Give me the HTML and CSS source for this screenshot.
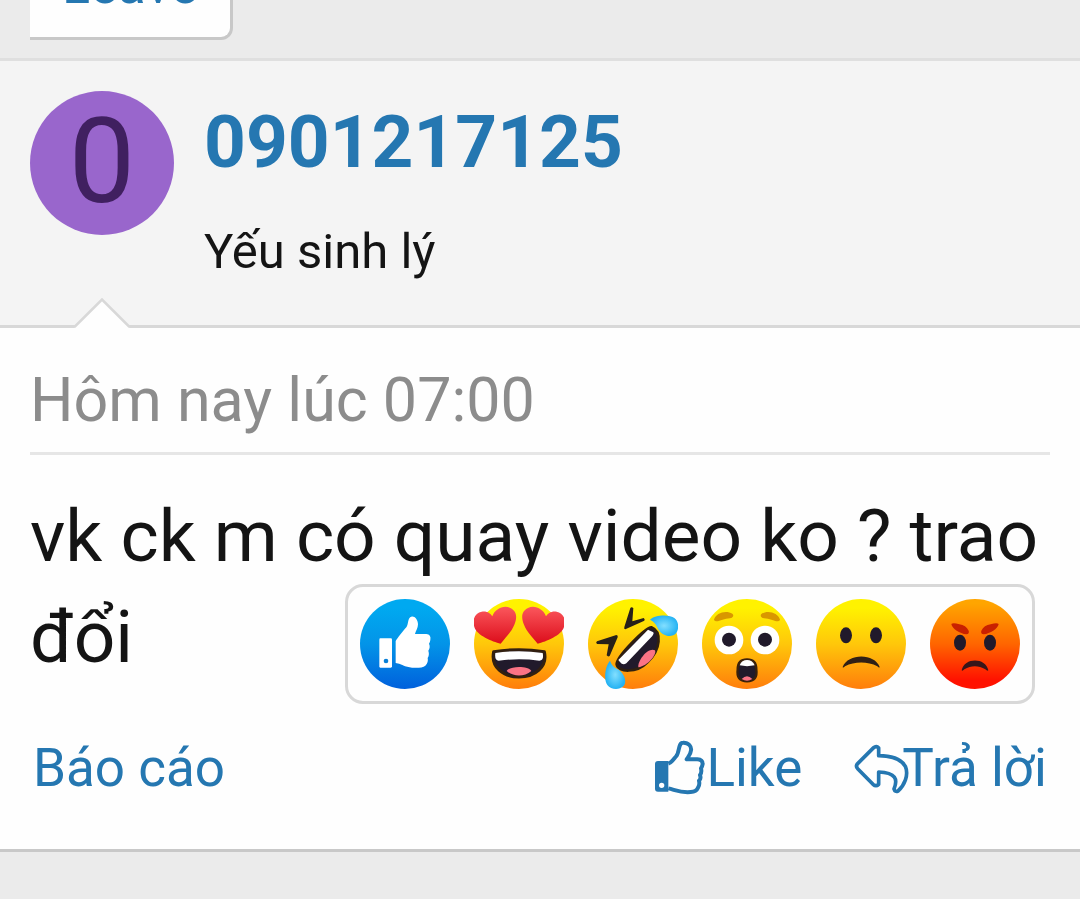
FILE: index.html
```html
<!DOCTYPE html>
<html lang="vi">
<head>
<meta charset="utf-8">
<meta name="viewport" content="width=device-width, initial-scale=1">
<title>0901217125</title>
<link rel="stylesheet" href="styles.css">
</head>
<body>
<div class="toolbar"><button class="leave" type="button">Leave</button></div>
<article class="post">
  <header class="user">
    <a class="avatar" href="#" aria-label="0901217125">0</a>
    <div class="user-info">
      <h1 class="name"><a href="#">0901217125</a></h1>
      <p class="title">Yếu sinh lý</p>
    </div>
    <svg class="notch" viewBox="0 0 60 30" aria-hidden="true"><path d="M2 30L30 2L58 30Z" fill="#fefefe"/><path d="M0 28.500H3L30 1.500L57 28.500H60" fill="none" stroke="#d8d8d8" stroke-width="2.500"/></svg>
  </header>
  <div class="main">
    <time class="date">Hôm nay lúc 07:00</time>
    <p class="message">vk ck m có quay video ko ? trao đổi</p>
    <footer class="footer">
      <a class="link" href="#">Báo cáo</a>
      <div class="actions">
        <a class="link" href="#"><svg class="icon" viewBox="43 63 156 165" aria-hidden="true"><path fill="#2577b1" fill-rule="evenodd" d="M55 123H86V215H55Q46 215 46 206V132Q46 123 55 123ZM66 188A8 8 0 1 0 66 204A8 8 0 1 0 66 188Z"/><path d="M86 131C96 128 103 116 110 108C120 98 115 68 130 68C147 67 156 80 154 91C153 103 146 110 141 118H173Q189 119 189 132Q188 139 184 145Q187 158 181 165Q185 177 178 182Q181 194 175 203Q170 215 153 216C125 219 110 211 86 205" fill="none" stroke="#2577b1" stroke-width="12" stroke-linejoin="round"/></svg>Like</a>
        <a class="link" href="#"><svg class="icon" viewBox="629 63 156 165" aria-hidden="true"><path d="M652 131L700 83Q708 76 715 84V107C752 107 782 117 795 139C806 165 792 197 773 213Q764 217 761 207C773 178 767 158 715 156V193Q707 201 698 193L652 146Q645 138 652 131Z" fill="none" stroke="#2577b1" stroke-width="11" stroke-linejoin="round"/></svg>Trả lời</a>
      </div>
      <div class="reactions">
        <button type="button" class="reaction" aria-label="Like"><svg viewBox="0 0 270 270"><defs><linearGradient id="blue" x2="0" y2="1"><stop offset=".1" stop-color="#00a9f0"/><stop offset=".5" stop-color="#0394e8"/><stop offset="1" stop-color="#0060dc"/></linearGradient><linearGradient id="yellow" x2="0" y2="1"><stop offset=".1" stop-color="#fff200"/><stop offset=".5" stop-color="#ffc70a"/><stop offset="1" stop-color="#ff7d0b"/></linearGradient><linearGradient id="red" x2="0" y2="1"><stop offset=".05" stop-color="#ffa500"/><stop offset=".5" stop-color="#ff6500"/><stop offset=".9" stop-color="#ff1200"/></linearGradient><linearGradient id="heart" x2="0" y2="1"><stop stop-color="#fb575c"/><stop offset="1" stop-color="#dc0d1b"/></linearGradient><radialGradient id="tear"><stop stop-color="#83dfff"/><stop offset="1" stop-color="#25b3f3"/></radialGradient></defs><circle cx="135" cy="135" r="135" fill="url(#blue)"/><path d="M61 118H92Q96 118 96 122V202Q96 206 92 206H61Q58 206 58 202V122Q58 118 61 118Z" fill="#fff"/><circle cx="78" cy="186" r="7" fill="#087fd7"/><path d="M107 126C111 119 131 93 139 85C146 75 143 55 154 53C163 50 174 61 174 76C174 88 167 96 165 105H199Q214 107 211 123Q210 130 207 134Q212 145 205 155Q209 168 203 177Q206 190 196 200C184 210 144 208 127 198Q118 193 107 192Z" fill="#fff"/></svg></button>
        <button type="button" class="reaction" aria-label="Love"><svg viewBox="0 0 270 270"><circle cx="135" cy="135" r="135" fill="url(#yellow)"/><path id="love" d="M80 134C55 128 8 109 1 84C-7 59 5 41 23 38C38 35 50 43 55 52C63 30 89 17 109 27C129 36 130 56 121 77C112 99 96 114 80 134Z" fill="url(#heart)"/><use href="#love" transform="translate(271 0) scale(-1 1)"/><path d="M59 158Q135 146 211 158C222 204 182 234 135 234C88 234 49 205 59 158Z" fill="#211a2b" stroke="#332010" stroke-width="9" stroke-linejoin="round"/><path d="M64 162Q135 151 206 162Q211 184 196 185Q135 177 74 185Q61 183 64 162Z" fill="#fff"/><path d="M98 216C106 200 164 200 172 216C151 234 118 234 98 216Z" fill="#fb7385"/></svg></button>
        <button type="button" class="reaction" aria-label="Haha"><svg viewBox="0 0 270 270"><circle cx="135" cy="135" r="135" fill="url(#yellow)"/><path d="M127 27Q130 22 136 27L133 67L167 57Q172 60 169 65L112 91Q107 91 109 84ZM27 127L85 108Q91 109 89 115L65 171Q60 174 56 169L62 136L27 135Q22 131 27 127Z" fill="#272019"/><path d="M190 85C174 84 86 172 86 196C90 220 145 224 179 189C219 151 222 98 190 85Z" fill="#211a2b" stroke="#30200f" stroke-width="8" stroke-linejoin="round"/><path d="M180 92L196 100Q199 104 193 111L115 193Q104 200 96 189L91 183Z" fill="#fff"/><path d="M151 205C148 183 182 143 201 154C207 167 179 201 151 205Z" fill="#fb7385"/><path d="M186 62C202 46 246 46 259 57C274 68 274 94 261 106C246 118 218 108 209 87C203 73 195 66 186 62Z" fill="url(#tear)"/><path d="M66 185C50 203 47 245 58 258C69 273 94 273 106 262C119 248 108 221 88 210C74 203 70 195 66 185Z" fill="url(#tear)"/></svg></button>
        <button type="button" class="reaction" aria-label="Wow"><svg viewBox="0 0 270 270"><circle cx="135" cy="135" r="135" fill="url(#yellow)"/><path id="brow" d="M36 62C41 41 73 32 91 44C97 49 93 56 84 58C67 58 53 68 42 67Q37 66 36 62Z" fill="#d99700"/><use href="#brow" transform="translate(270 0) scale(-1 1)"/><circle cx="81" cy="123" r="43" fill="#fff"/><circle cx="189" cy="123" r="43" fill="#fff"/><circle cx="81" cy="122" r="21" fill="#211a2b"/><circle cx="189" cy="122" r="21" fill="#211a2b"/><path d="M107 211C107 192 117 181 135 181S163 192 163 211Q168 247 135 247T107 211Z" fill="#211a2b" stroke="#3a210b" stroke-width="7"/><path d="M113 199C119 178 151 178 158 199Q135 204 113 199Z" fill="#fff"/><path d="M119 240Q135 224 151 240Q135 250 119 240Z" fill="#fb7385"/></svg></button>
        <button type="button" class="reaction" aria-label="Sad"><svg viewBox="0 0 270 270"><circle cx="135" cy="135" r="135" fill="url(#yellow)"/><ellipse cx="90" cy="109" rx="18" ry="24" fill="#211a2b"/><ellipse cx="180" cy="109" rx="18" ry="24" fill="#211a2b"/><path d="M80 204C96 162 176 162 191 204Q190 208 184 202C155 187 116 187 87 202Q81 208 80 204Z" fill="#302015"/></svg></button>
        <button type="button" class="reaction" aria-label="Angry"><svg viewBox="0 0 270 270"><circle cx="135" cy="135" r="135" fill="url(#red)"/><path id="frown" d="M64 75Q69 70 88 76Q108 79 116 95Q119 104 109 106C90 104 66 89 64 75Z" fill="#c92100"/><use href="#frown" transform="translate(270 0) scale(-1 1)"/><ellipse cx="90" cy="131" rx="18" ry="24" fill="#211a2b"/><ellipse cx="180" cy="131" rx="18" ry="24" fill="#211a2b"/><path d="M95 214C103 175 167 175 175 214Q172 217 166 211C145 199 124 199 103 211Q97 217 95 214Z" fill="#38161a"/></svg></button>
      </div>
    </footer>
  </div>
</article>
</body>
</html>
```

FILE: styles.css
```css
* { box-sizing: border-box; }
body {
  margin: 0;
  background: #ebebeb;
  color: #141414;
  font-family: Roboto, "Noto Sans", sans-serif;
}
a { color: #2577b1; text-decoration: none; }
button { font-family: inherit; cursor: pointer; }
.toolbar {
  display: flex;
  align-items: flex-end;
  height: 58px;
  padding: 0 30px 18px;
  overflow: hidden;
}
.leave {
  flex: none;
  padding: 20px 32px 21px;
  border: solid #c8c8c8;
  border-width: 3px 3px 3px 0;
  border-radius: 0 12px 12px 0;
  background: #fefefe;
  color: #2577b1;
  font-size: 52px;
  line-height: 60px;
}
.post {
  border-top: 3px solid #dfdfdf;
  border-bottom: 3px solid #c8c8c8;
  background: #fefefe;
}
.user {
  position: relative;
  display: flex;
  gap: 30px;
  padding: 30px 30px 39px;
  border-bottom: 3px solid #d8d8d8;
  background: #f4f4f4;
}
.avatar {
  flex: none;
  width: 144px;
  height: 144px;
  border-radius: 50%;
  background: #9966cc;
  color: #402060;
  font-size: 118px;
  line-height: 142px;
  text-align: center;
}
.user-info { display: flex; flex-direction: column; gap: 25px; }
.name { margin: 0; font-size: 73px; line-height: 102px; font-weight: 700; }
.title { margin: 0; font-size: 49px; line-height: 68px; }
.notch {
  position: absolute;
  left: 72px;
  bottom: -3px;
  width: 60px;
  height: 30px;
}
.main { padding: 30px 30px 45px; }
.date {
  display: block;
  padding-bottom: 10px;
  border-bottom: 3px solid #e6e6e6;
  color: #8c8c8c;
  font-size: 61px;
  line-height: 84px;
}
.message { margin: 31px 0 44px; font-size: 73px; line-height: 101px; }
.footer {
  position: relative;
  display: flex;
  justify-content: space-between;
  padding: 0 3px;
}
.link { display: flex; align-items: center; font-size: 53px; line-height: 72px; }
.actions { display: flex; gap: 48px; }
.icon { width: 52px; height: 55px; overflow: visible; }
.reactions {
  position: absolute;
  right: 15px;
  bottom: calc(100% + 28px);
  display: flex;
  gap: 24px;
  padding: 12px;
  border: 3px solid #d8d8d8;
  border-radius: 18px;
  background: #fefefe;
}
.reaction { width: 90px; height: 90px; padding: 0; border: 0; background: none; }
.reaction svg { display: block; width: 100%; height: 100%; }
```
